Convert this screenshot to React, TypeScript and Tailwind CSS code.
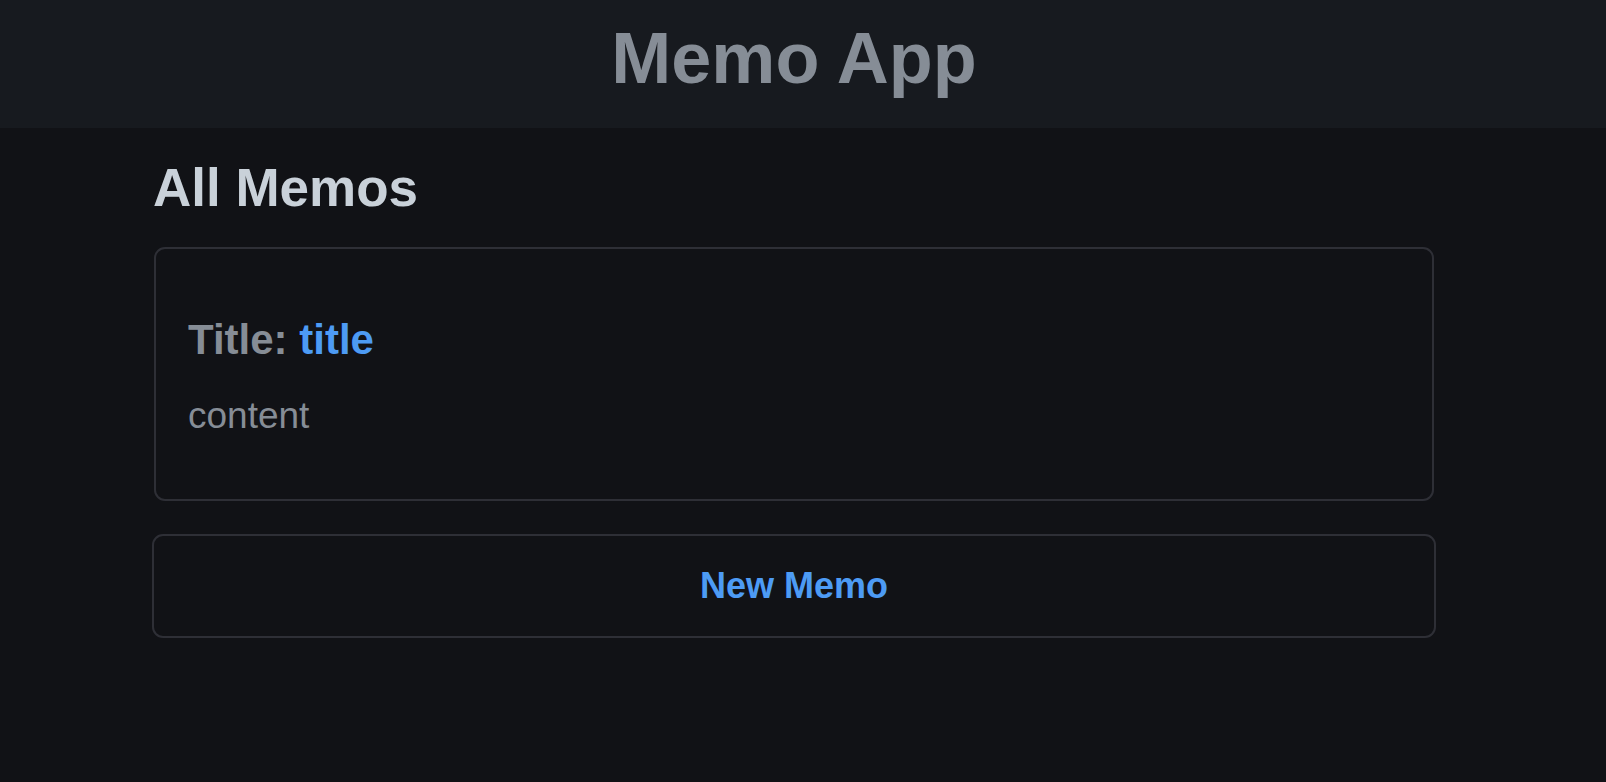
export default function App() {
  const font = { fontFamily: '"Liberation Sans", Arial, sans-serif' };

  return (
    <div className="min-h-screen bg-[#111216]" style={font}>
      <header className="h-[128px] bg-[#171a1f] pr-[18px] pt-[22px]">
        <h1 className="text-center text-[72px] font-bold leading-none text-[#868d96]">Memo App</h1>
      </header>

      <main className="pr-[18px]">
        <div className="mx-auto w-[1284px]">
          <h2 className="mt-[33px] pl-[1px] text-[53px] font-bold leading-none text-[#c9d1d9]">All Memos</h2>

          {/* memo card */}
          <div className="mx-[2px] mt-[33px] rounded-[11px] border-2 border-[#2e2f36] px-[32px] pb-[65px] pt-[70px]">
            <h3 className="text-[42px] font-bold leading-none text-[#868d96]">
              Title: <span className="text-[#4d9bf4]">title</span>
            </h3>
            <p className="mt-[36px] text-[37px] leading-none text-[#868d96]">content</p>
          </div>

          <button className="mt-[33px] flex h-[104px] w-full items-center justify-center rounded-[11px] border-2 border-[#2e2f36] text-[36px] font-bold leading-none text-[#4d9bf4]">
            New Memo
          </button>
        </div>
      </main>
    </div>
  );
}
